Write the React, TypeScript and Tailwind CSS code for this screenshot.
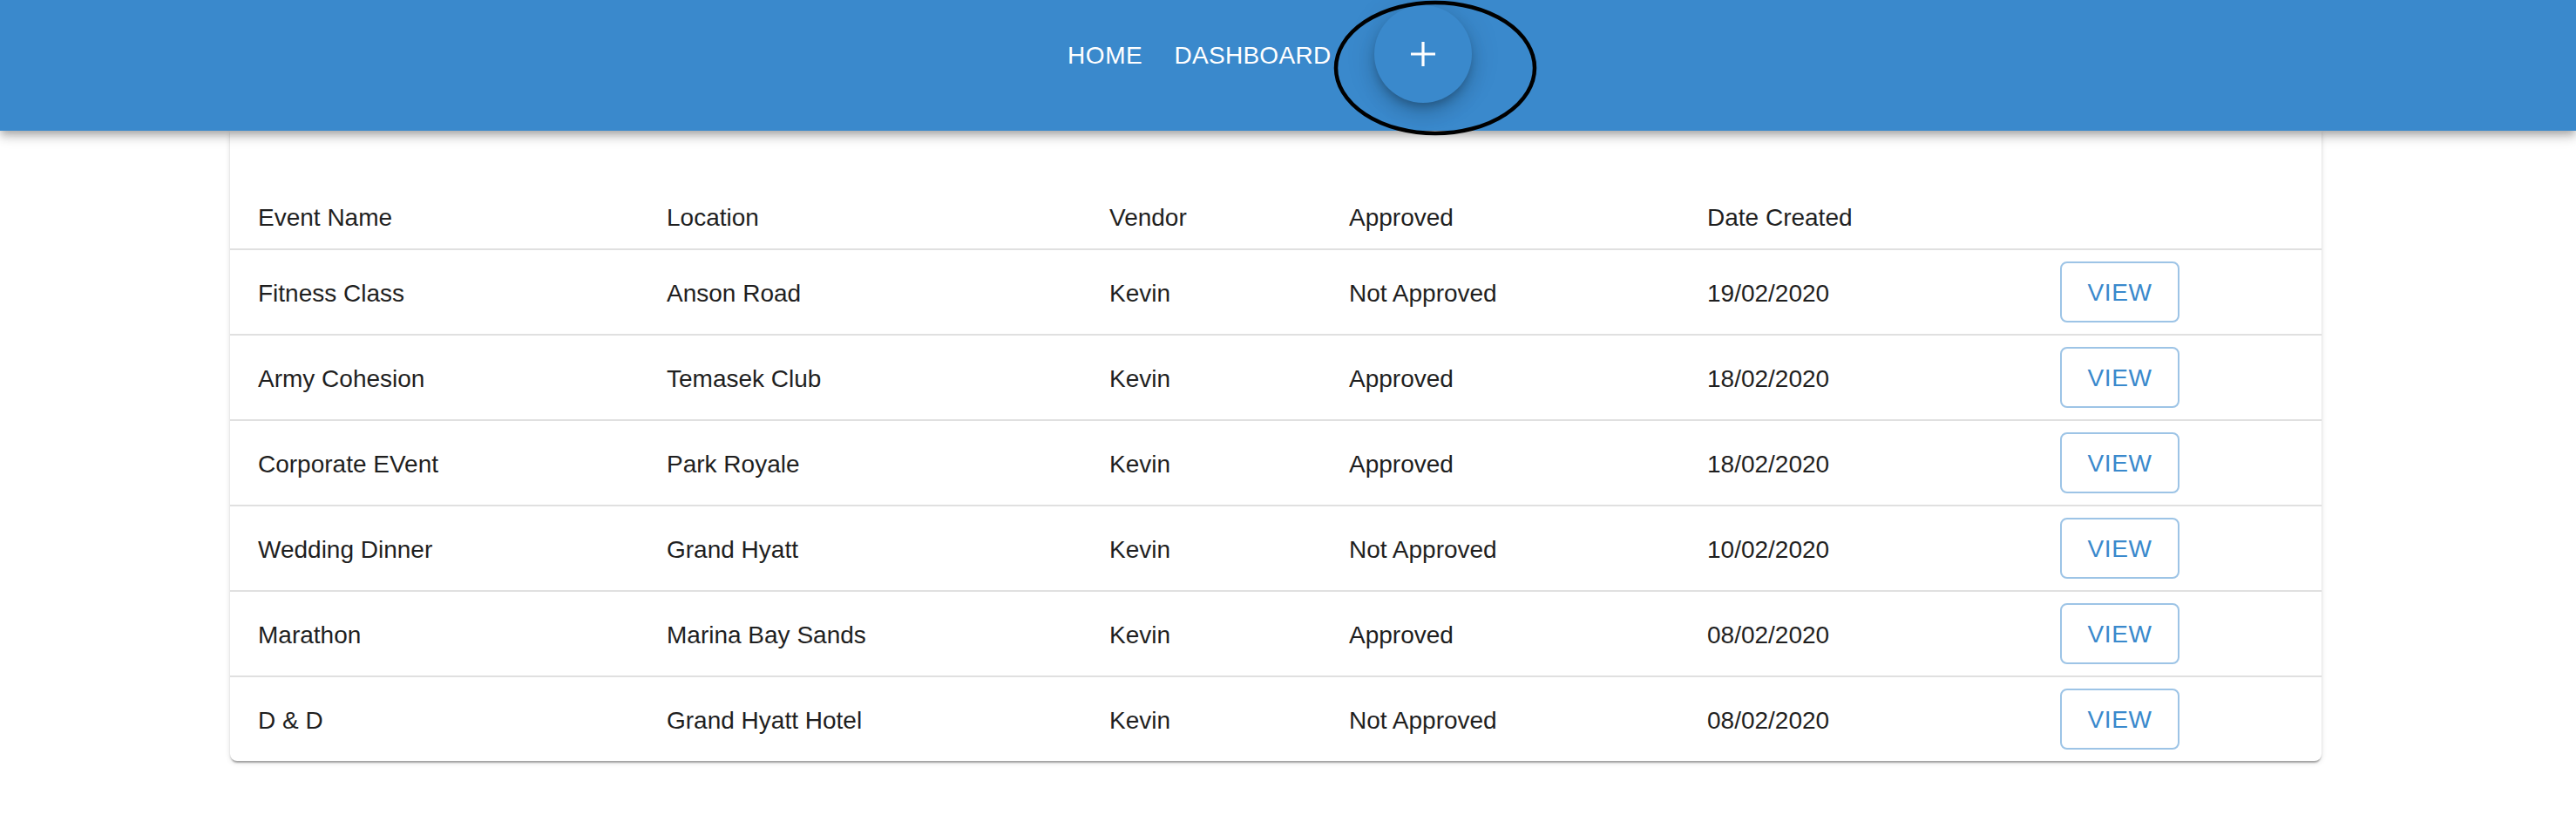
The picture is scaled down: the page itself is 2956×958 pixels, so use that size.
import React from "react";

const rows = [
  ["Fitness Class", "Anson Road", "Kevin", "Not Approved", "19/02/2020"],
  ["Army Cohesion", "Temasek Club", "Kevin", "Approved", "18/02/2020"],
  ["Corporate EVent", "Park Royale", "Kevin", "Approved", "18/02/2020"],
  ["Wedding Dinner", "Grand Hyatt", "Kevin", "Not Approved", "10/02/2020"],
  ["Marathon", "Marina Bay Sands", "Kevin", "Approved", "08/02/2020"],
  ["D & D", "Grand Hyatt Hotel", "Kevin", "Not Approved", "08/02/2020"],
];

const headers = ["Event Name", "Location", "Vendor", "Approved", "Date Created", ""];

const gridCols = "grid grid-cols-[469px_508px_275px_411px_405px_332px]";

export default function App() {
  return (
    <div className="min-h-[958px] bg-white text-[#1f1f1f] font-['Liberation_Sans',Arial,sans-serif]">
      <header className="relative z-10 h-[150px] bg-[#3a89cc] shadow-[0_4px_8px_-2px_rgba(0,0,0,0.2),0_8px_10px_0_rgba(0,0,0,0.14),0_2px_20px_0_rgba(0,0,0,0.12)]">
        <div className="flex h-full items-start pl-[1209px]">
          <nav className="mt-[40px] flex items-center">
            <button className="h-[48px] px-[16px] text-[28px] leading-[48px] tracking-[0.6px] text-white uppercase">
              Home
            </button>
            <button className="ml-[4px] h-[48px] px-[16px] text-[28px] leading-[48px] tracking-[0.3px] text-white uppercase">
              Dashboard
            </button>
          </nav>
          <button className="ml-[34px] mt-[6px] flex h-[112px] w-[112px] items-center justify-center rounded-full bg-[#3a89cc] shadow-[0_6px_10px_-2px_rgba(0,0,0,0.2),0_12px_20px_0_rgba(0,0,0,0.14),0_2px_36px_0_rgba(0,0,0,0.12)]">
            <svg width="48" height="48" viewBox="0 0 24 24" fill="white">
              <path d="M19 12.8h-6.2V19h-1.6v-6.2H5v-1.6h6.2V5h1.6v6.2H19v1.6z" />
            </svg>
          </button>
        </div>
        <svg
          className="pointer-events-none absolute left-[1525px] top-0"
          width="245"
          height="162"
          viewBox="0 0 245 162"
        >
          <ellipse cx="122" cy="78" rx="114" ry="75" fill="none" stroke="#000" strokeWidth="4.5" />
        </svg>
      </header>

      <main className="pl-[264px]">
        <div className="w-[2400px] rounded-b-[8px] bg-white shadow-[0_4px_2px_-2px_rgba(0,0,0,0.2),0_2px_2px_0_rgba(0,0,0,0.14),0_2px_6px_0_rgba(0,0,0,0.12)]">
          <div className={`${gridCols} h-[137px] items-end border-b-2 border-[#e0e0e0] pb-[11px]`}>
            {headers.map((h, i) => (
              <div key={i} className="pl-[32px] text-[28px] leading-[48px]">
                {h}
              </div>
            ))}
          </div>
          {rows.map((r, ri) => (
            <div
              key={ri}
              className={`${gridCols} items-center ${
                ri < rows.length - 1 ? "h-[98px] border-b-2 border-[#e0e0e0]" : "h-[96px]"
              }`}
            >
              {r.map((c, ci) => (
                <div key={ci} className="pl-[32px] pt-[3px] text-[28px] leading-[48px]">
                  {c}
                </div>
              ))}
              <div className="pl-[32px]">
                <button className="flex h-[70px] w-[137px] items-center justify-center rounded-[8px] border-2 border-[#9dc4e6] pt-[2px] text-[28px] tracking-[0.6px] text-[#3a89cc] uppercase">
                  View
                </button>
              </div>
            </div>
          ))}
        </div>
      </main>
    </div>
  );
}
